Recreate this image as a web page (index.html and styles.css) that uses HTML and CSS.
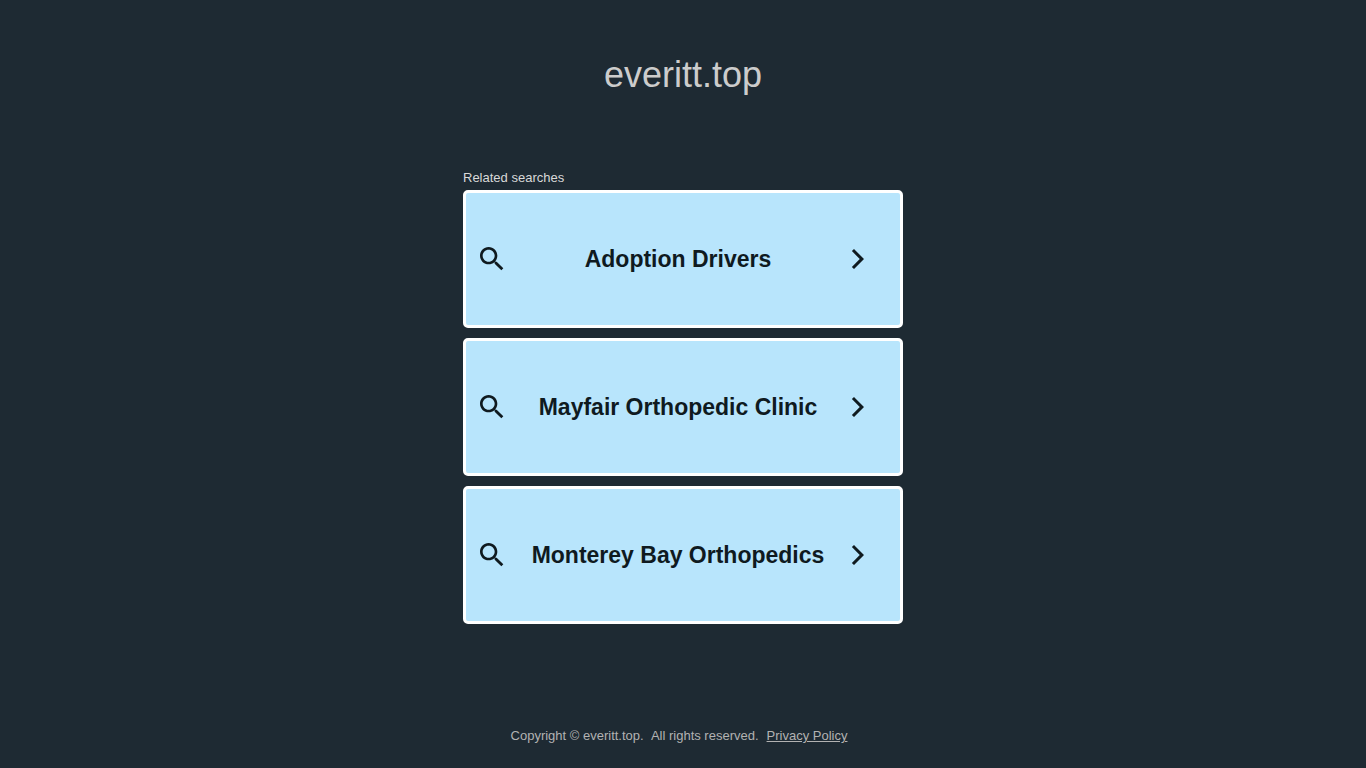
FILE: index.html
```html
<!DOCTYPE html>
<html lang="en">
<head>
    <meta charset="UTF-8">
    <meta name="viewport" content="width=device-width, initial-scale=1.0">
    <title>everitt.top</title>
    <link rel="stylesheet" href="styles.css">
</head>
<body>

<header class="header">
    <h1>everitt.top</h1>
</header>

<main class="container">
    <h2 class="label">Related searches</h2>
    <nav class="searches">
        <a class="search-item" href="#">
            <svg class="icon-search" viewBox="0 0 24 24"><path d="M15.5 14h-.79l-.28-.27C15.41 12.59 16 11.11 16 9.5 16 5.91 13.09 3 9.5 3S3 5.91 3 9.5 5.91 16 9.5 16c1.61 0 3.09-.59 4.23-1.57l.27.28v.79l5 4.99L20.49 19l-4.99-5zm-6 0C7.01 14 5 11.99 5 9.5S7.01 5 9.5 5 14 7.01 14 9.5 11.99 14 9.5 14z"/></svg>
            <span>Adoption Drivers</span>
            <svg class="icon-arrow" viewBox="0 0 24 24"><path d="M5.88 4.12L13.76 12l-7.88 7.88L8 22l10-10L8 2z"/></svg>
        </a>
        <a class="search-item" href="#">
            <svg class="icon-search" viewBox="0 0 24 24"><path d="M15.5 14h-.79l-.28-.27C15.41 12.59 16 11.11 16 9.5 16 5.91 13.09 3 9.5 3S3 5.91 3 9.5 5.91 16 9.5 16c1.61 0 3.09-.59 4.23-1.57l.27.28v.79l5 4.99L20.49 19l-4.99-5zm-6 0C7.01 14 5 11.99 5 9.5S7.01 5 9.5 5 14 7.01 14 9.5 11.99 14 9.5 14z"/></svg>
            <span>Mayfair Orthopedic Clinic</span>
            <svg class="icon-arrow" viewBox="0 0 24 24"><path d="M5.88 4.12L13.76 12l-7.88 7.88L8 22l10-10L8 2z"/></svg>
        </a>
        <a class="search-item" href="#">
            <svg class="icon-search" viewBox="0 0 24 24"><path d="M15.5 14h-.79l-.28-.27C15.41 12.59 16 11.11 16 9.5 16 5.91 13.09 3 9.5 3S3 5.91 3 9.5 5.91 16 9.5 16c1.61 0 3.09-.59 4.23-1.57l.27.28v.79l5 4.99L20.49 19l-4.99-5zm-6 0C7.01 14 5 11.99 5 9.5S7.01 5 9.5 5 14 7.01 14 9.5 11.99 14 9.5 14z"/></svg>
            <span>Monterey Bay Orthopedics</span>
            <svg class="icon-arrow" viewBox="0 0 24 24"><path d="M5.88 4.12L13.76 12l-7.88 7.88L8 22l10-10L8 2z"/></svg>
        </a>
    </nav>
</main>

<footer class="footer">
    <span>Copyright © everitt.top. &nbsp;All rights reserved.</span>
    <a href="#">Privacy Policy</a>
</footer>

</body>
</html>
```
FILE: styles.css
```css
* {
    box-sizing: border-box;
}

body {
    display: flex;
    flex-direction: column;
    min-height: 100vh;
    margin: 0;
    background-color: #1e2a33;
    color: #cccccc;
    font-family: Arial, "Liberation Sans", sans-serif;
    font-size: 13px;
    line-height: 16px;
}

.header {
    padding: 55px 16px 75px;
    text-align: center;
}

h1 {
    margin: 0;
    font-size: 36px;
    font-weight: normal;
    line-height: 40px;
}

.container {
    width: 100%;
    max-width: 440px;
    margin: 0 auto;
}

.label {
    margin: 0 0 4px;
    color: #d9d9d9;
    font-size: 13px;
    font-weight: normal;
}

.searches {
    display: flex;
    flex-direction: column;
    gap: 10px;
}

.search-item {
    display: flex;
    align-items: center;
    min-height: 138px;
    padding: 10px 30px 10px 10px;
    border: 3px solid #ffffff;
    border-radius: 5px;
    background-color: #b8e5fc;
    color: #0f1a1f;
    font-size: 23px;
    font-weight: bold;
    line-height: 28px;
    text-align: center;
    text-decoration: none;
}

.search-item span {
    flex: 1;
}

.search-item svg {
    flex: none;
    fill: currentColor;
}

.icon-search {
    width: 32px;
    height: 32px;
    margin-right: 2px;
}

.icon-arrow {
    width: 24px;
    height: 24px;
}

.footer {
    display: flex;
    flex-wrap: wrap;
    justify-content: center;
    gap: 8px;
    margin-top: auto;
    padding: 40px 8px 24px 0;
    color: #b2b2b2;
}

.footer a {
    color: inherit;
}
```
